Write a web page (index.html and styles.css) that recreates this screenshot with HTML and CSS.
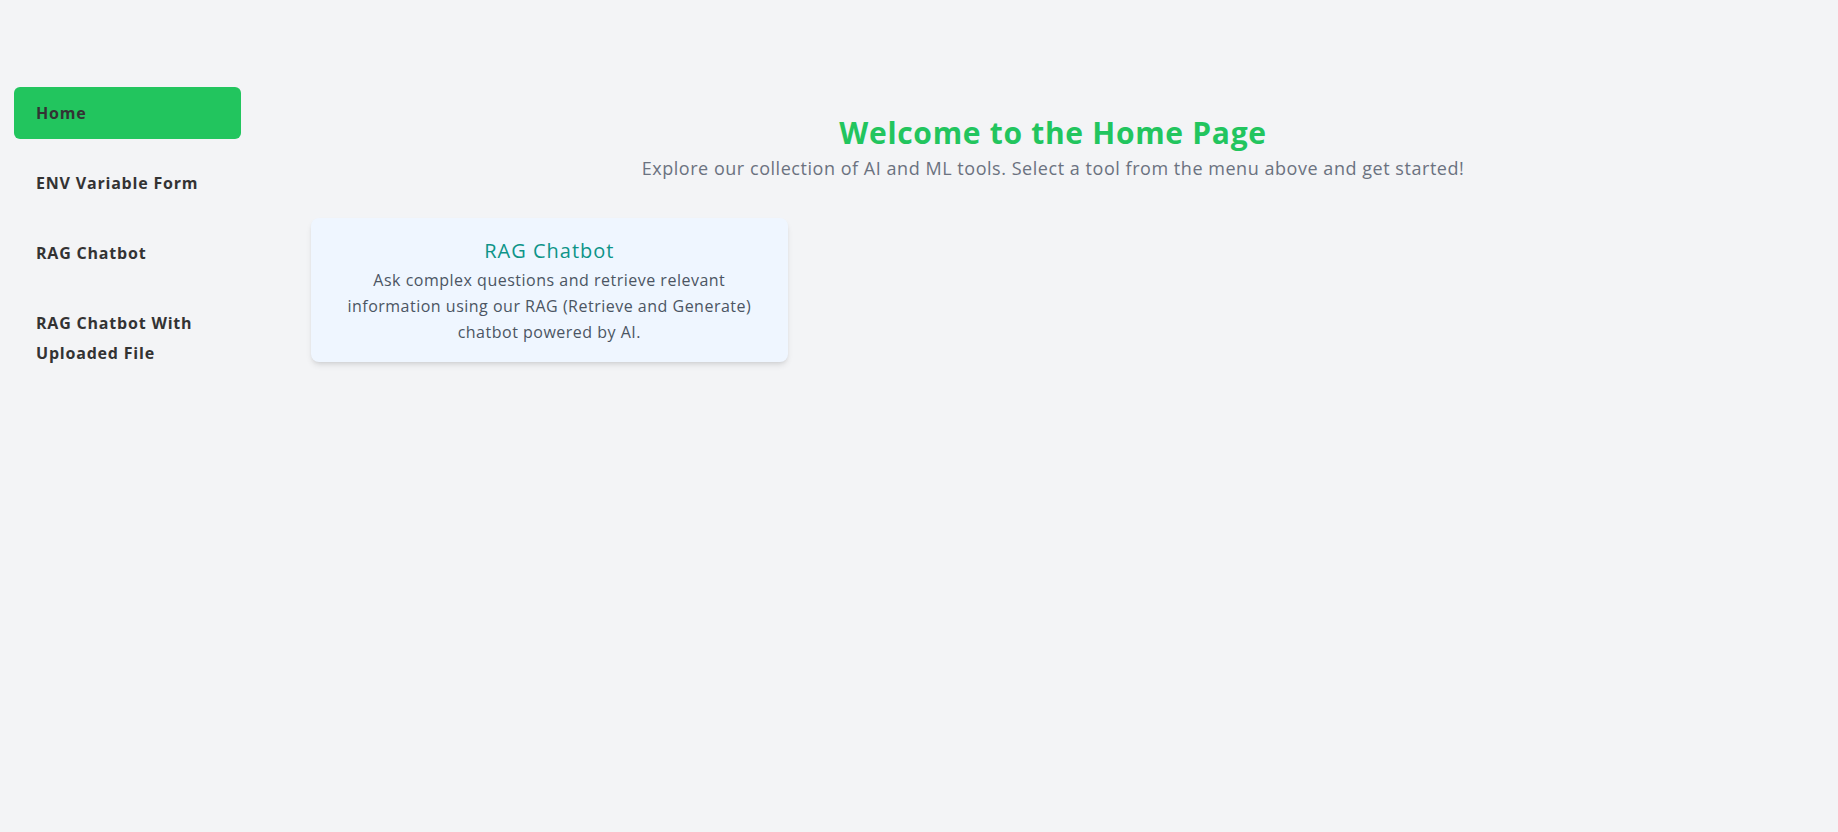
FILE: index.html
```html
<!DOCTYPE html>
<html lang="en">
<head>
<meta charset="utf-8">
<title>Home</title>
<link rel="stylesheet" href="styles.css">
</head>
<body>
<div class="layout">
  <aside class="sidebar">
    <nav class="nav">
      <a class="nav-item active" href="#">Home</a>
      <a class="nav-item" href="#">ENV Variable Form</a>
      <a class="nav-item" href="#">RAG Chatbot</a>
      <a class="nav-item" href="#">RAG Chatbot With Uploaded File</a>
    </nav>
  </aside>
  <main class="main">
    <h1 class="title">Welcome to the Home Page</h1>
    <p class="subtitle">Explore our collection of AI and ML tools. Select a tool from the menu above and get started!</p>
    <div class="grid">
      <div class="card">
        <h2 class="card-title">RAG Chatbot</h2>
        <p class="card-text">Ask complex questions and retrieve relevant information using our RAG (Retrieve and Generate) chatbot powered by AI.</p>
      </div>
    </div>
  </main>
</div>
</body>
</html>
```
FILE: styles.css
```css
html, body {
  margin: 0;
  padding: 0;
}
body {
  background: #f3f4f6;
  font-family: "Open Sans", "Noto Sans", sans-serif;
  min-height: 832px;
}
.layout {
  display: flex;
  align-items: flex-start;
}
.sidebar {
  width: 268px;
  flex: 0 0 268px;
  box-sizing: border-box;
  padding: 87px 0 0 14px;
}
.nav {
  display: flex;
  flex-direction: column;
  gap: 18px;
  width: 227px;
}
.nav-item {
  display: block;
  padding: 11px 22px;
  font-size: 16px;
  line-height: 30px;
  font-weight: 700;
  letter-spacing: 0.8px;
  color: #333333;
  text-decoration: none;
  border-radius: 6px;
}
.nav-item.active {
  background: #22c55e;
}
.main {
  flex: 1;
  box-sizing: border-box;
  padding: 115px 43px 0 43px;
  text-align: center;
}
.title {
  margin: 0 0 3px 0;
  font-size: 30px;
  line-height: 36px;
  font-weight: 700;
  letter-spacing: 0.7px;
  color: #22c55e;
}
.subtitle {
  margin: 0 0 36px 0;
  font-size: 18px;
  line-height: 28px;
  letter-spacing: 0.54px;
  color: #6b7280;
}
.grid {
  display: grid;
  grid-template-columns: repeat(3, 1fr);
  gap: 27px;
}
.card {
  background: #eff6ff;
  border-radius: 8px;
  padding: 19px 24px 17px;
  box-shadow: 0 4px 6px -1px rgba(0, 0, 0, 0.1), 0 2px 4px -2px rgba(0, 0, 0, 0.1);
  text-align: center;
}
.card-title {
  margin: 0 0 2px 0;
  font-size: 20px;
  line-height: 28px;
  font-weight: 400;
  letter-spacing: 1px;
  color: #0d9488;
}
.card-text {
  margin: 0;
  font-size: 16px;
  line-height: 26px;
  letter-spacing: 0.5px;
  color: #4b5563;
}
```
